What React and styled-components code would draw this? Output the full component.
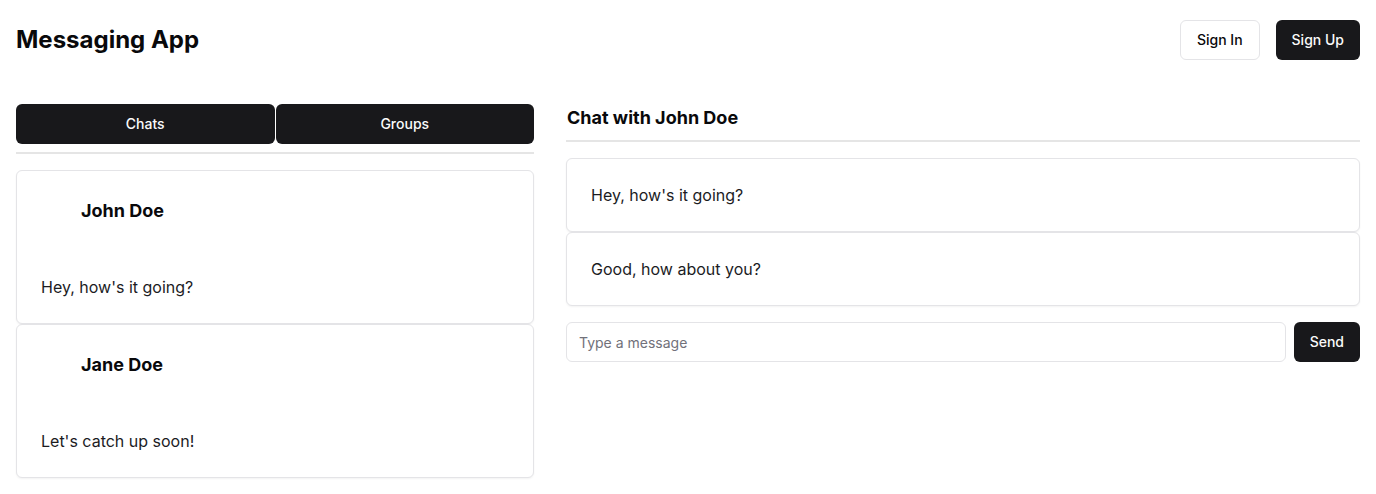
import React from "react";
import styled, { createGlobalStyle } from "styled-components";

const Global = createGlobalStyle`
  * { box-sizing: border-box; }
  body {
    margin: 0;
    background: #ffffff;
    color: #09090b;
    font-family: Inter, "Noto Sans", sans-serif;
  }
`;

const Page = styled.div`
  padding: 0 16px 16px;
`;

const Header = styled.header`
  display: flex;
  align-items: center;
  justify-content: space-between;
  height: 80px;
`;

const Title = styled.h1`
  margin: 0;
  font-size: 24px;
  line-height: 32px;
  font-weight: 700;
`;

const Actions = styled.div`
  display: flex;
  gap: 16px;
`;

const Button = styled.button`
  height: 40px;
  padding: 0 16px;
  border-radius: 6px;
  font-family: inherit;
  font-size: 14px;
  font-weight: 500;
  line-height: 20px;
  cursor: pointer;
  border: ${(p) => (p.$outline ? "1px solid #e4e4e7" : "none")};
  background: ${(p) => (p.$outline ? "#ffffff" : "#18181b")};
  color: ${(p) => (p.$outline ? "#09090b" : "#fafafa")};
`;

const Main = styled.main`
  display: grid;
  grid-template-columns: 518px 1fr;
  gap: 32px;
  margin-top: 24px;
  align-items: start;
`;

const Column = styled.section`
  display: flex;
  flex-direction: column;
`;

const Tabs = styled.div`
  display: grid;
  grid-template-columns: 1fr 1fr;
  gap: 1px;
  padding-bottom: 8px;
  border-bottom: 2px solid #e5e5e5;
  margin-bottom: 16px;
`;

const Tab = styled(Button)`
  width: 100%;
`;

const Card = styled.div`
  border: 1px solid #e4e4e7;
  border-radius: 6px;
  background: #fff;
  box-shadow: 0 1px 2px rgba(0, 0, 0, 0.05);
  padding: 24px;
`;

const ChatHead = styled.div`
  display: flex;
  align-items: center;
  height: 32px;
  padding-left: 40px;
`;

const Name = styled.h3`
  margin: 0;
  font-size: 18px;
  line-height: 28px;
  font-weight: 700;
`;

const Preview = styled.p`
  margin: 48px 0 0;
  font-size: 16px;
  line-height: 24px;
  color: #1c1c1f;
`;

const ChatTitle = styled.h2`
  margin: 0 0 16px;
  padding: 0 0 8px 1px;
  border-bottom: 2px solid #e5e5e5;
  font-size: 18px;
  line-height: 28px;
  font-weight: 700;
`;

const MessageText = styled.p`
  margin: 0;
  font-size: 16px;
  line-height: 24px;
  color: #1c1c1f;
`;

const Composer = styled.form`
  display: flex;
  gap: 8px;
  margin-top: 16px;
`;

const Input = styled.input`
  flex: 1;
  height: 40px;
  padding: 0 12px;
  border: 1px solid #e4e4e7;
  border-radius: 6px;
  font-family: inherit;
  font-size: 14px;
  color: #09090b;
  outline: none;
  &::placeholder { color: #71717a; }
`;

const chats = [
  { name: "John Doe", text: "Hey, how's it going?" },
  { name: "Jane Doe", text: "Let's catch up soon!" },
];

const messages = ["Hey, how's it going?", "Good, how about you?"];

export default function App() {
  return (
    <Page>
      <Global />
      <Header>
        <Title>Messaging App</Title>
        <Actions>
          <Button $outline>Sign In</Button>
          <Button>Sign Up</Button>
        </Actions>
      </Header>
      <Main>
        <Column>
          <Tabs>
            <Tab>Chats</Tab>
            <Tab>Groups</Tab>
          </Tabs>
          {chats.map((c) => (
            <Card key={c.name}>
              <ChatHead>
                <Name>{c.name}</Name>
              </ChatHead>
              <Preview>{c.text}</Preview>
            </Card>
          ))}
        </Column>
        <Column>
          <ChatTitle>Chat with John Doe</ChatTitle>
          {messages.map((m) => (
            <Card key={m}>
              <MessageText>{m}</MessageText>
            </Card>
          ))}
          <Composer onSubmit={(e) => e.preventDefault()}>
            <Input placeholder="Type a message" />
            <Button type="submit">Send</Button>
          </Composer>
        </Column>
      </Main>
    </Page>
  );
}
